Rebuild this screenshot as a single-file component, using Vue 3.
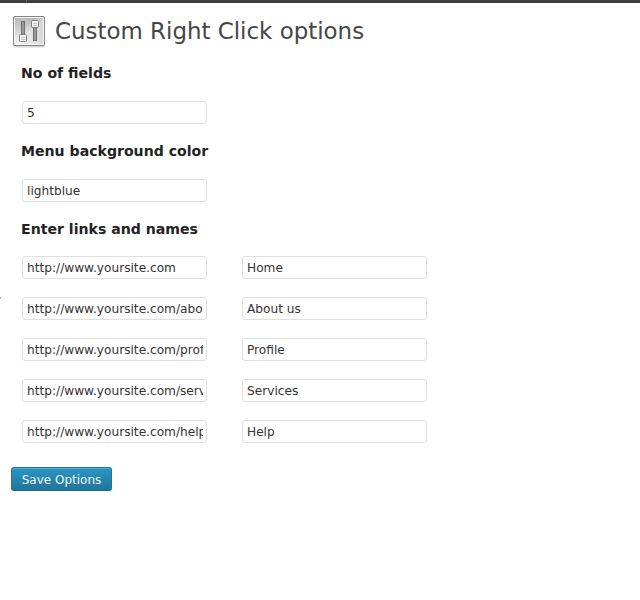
<script setup>
import { ref } from 'vue'

const count = ref('5')
const color = ref('lightblue')
const links = ref([
  { url: 'http://www.yoursite.com', name: 'Home' },
  { url: 'http://www.yoursite.com/about', name: 'About us' },
  { url: 'http://www.yoursite.com/profile', name: 'Profile' },
  { url: 'http://www.yoursite.com/services', name: 'Services' },
  { url: 'http://www.yoursite.com/help', name: 'Help' }
])
</script>

<template>
  <div class="page">
    <div class="adminbar"><span class="divider"></span></div>
    <span class="menu-edge"></span>
    <header class="heading">
      <svg class="icon" width="34" height="33" viewBox="0 0 34 33">
        <defs>
          <linearGradient id="plate" x1="0" y1="0" x2="0" y2="1">
            <stop offset="0" stop-color="#b9b9b9" />
            <stop offset="1" stop-color="#f0f0f0" />
          </linearGradient>
          <linearGradient id="shade" x1="0" y1="0" x2="1" y2="1">
            <stop offset="0.35" stop-color="#fff" stop-opacity="0" />
            <stop offset="0.55" stop-color="#fff" stop-opacity="0.35" />
            <stop offset="1" stop-color="#aaa" stop-opacity="0.3" />
          </linearGradient>
        </defs>
        <rect x="1" y="2" width="32" height="30.5" rx="2" fill="#d6d6d6" />
        <rect x="1.5" y="1.5" width="31" height="29" rx="1.5" fill="#f8f8f8" stroke="#858585" />
        <rect x="3" y="3" width="28" height="26" fill="url(#plate)" />
        <rect x="3" y="3" width="28" height="26" fill="url(#shade)" />
        <rect x="9.5" y="6.5" width="3" height="14" fill="#999" stroke="#707070" />
        <rect x="7.5" y="19.5" width="7" height="7" rx="1" fill="#f4f4f4" stroke="#7c7c7c" />
        <path d="M9 22.5h4M9 24.5h4" stroke="#c4c4c4" />
        <rect x="21.5" y="11.5" width="3" height="14" fill="#999" stroke="#707070" />
        <rect x="19.5" y="5.5" width="7" height="7" rx="1" fill="#f4f4f4" stroke="#7c7c7c" />
        <path d="M21 8.5h4M21 10.5h4" stroke="#c4c4c4" />
      </svg>
      <h2>Custom Right Click options</h2>
    </header>
    <form class="options" @submit.prevent>
      <h3>No of fields</h3>
      <input v-model="count" type="text" />
      <h3>Menu background color</h3>
      <input v-model="color" type="text" />
      <h3 class="links-title">Enter links and names</h3>
      <div class="links">
        <template v-for="(link, i) in links" :key="i">
          <input v-model="link.url" type="text" />
          <input v-model="link.name" type="text" />
        </template>
      </div>
      <button type="submit">Save Options</button>
    </form>
  </div>
</template>

<style>
body {
  background: #fff;
}
</style>

<style scoped>
.page {
  position: relative;
  height: 600px;
  overflow: hidden;
  background: #fff;
  font-family: "DejaVu Sans", sans-serif;
  color: #333;
}
.adminbar {
  height: 3px;
  background: linear-gradient(#444, #373737);
}
.divider {
  display: block;
  width: 1px;
  height: 3px;
  margin-left: 26px;
  background: #666;
}
.menu-edge {
  position: absolute;
  left: 0;
  top: 297px;
  width: 1px;
  height: 2px;
  background: #bbb;
}
.heading {
  display: flex;
  align-items: flex-start;
  gap: 9px;
  height: 46px;
  padding: 12px 0 0 12px;
  box-sizing: border-box;
}
.icon {
  display: block;
  flex: none;
}
h2 {
  margin: 0;
  padding-top: 2px;
  font-size: 22.93px;
  line-height: 29px;
  font-weight: 400;
  color: #464646;
  white-space: nowrap;
}
.options {
  display: flex;
  flex-direction: column;
  align-items: flex-start;
  padding: 15px 0 0 22px;
}
h3 {
  margin: 0 0 19px -1px;
  font-size: 14.1px;
  line-height: 18px;
  font-weight: 700;
  color: #222;
}
input {
  box-sizing: border-box;
  width: 185px;
  height: 23px;
  margin: 0;
  padding: 3px 3px 3px 4px;
  border: 1px solid #dfdfdf;
  border-radius: 3px;
  background: #fff;
  color: #333;
  font-family: inherit;
  font-size: 12.16px;
  line-height: 15px;
  outline: none;
}
.options > input {
  margin-bottom: 18px;
}
.links-title {
  margin-bottom: 18px;
}
.links {
  display: grid;
  grid-template-columns: 185px 185px;
  gap: 18px 35px;
}
button {
  box-sizing: border-box;
  width: 101px;
  height: 24px;
  margin: 24px 0 0 -11px;
  padding: 2px 0 0;
  border: 1px solid #21759b;
  border-bottom-color: #1e6a8d;
  border-radius: 3px;
  background: linear-gradient(#2a95c5, #21759b);
  box-shadow: inset 0 1px 0 rgba(120, 200, 230, 0.5);
  color: #f4f9fc;
  font-family: inherit;
  font-size: 12px;
  line-height: 20px;
  text-shadow: 0 1px 0 rgba(0, 0, 0, 0.1);
  white-space: nowrap;
}
</style>
